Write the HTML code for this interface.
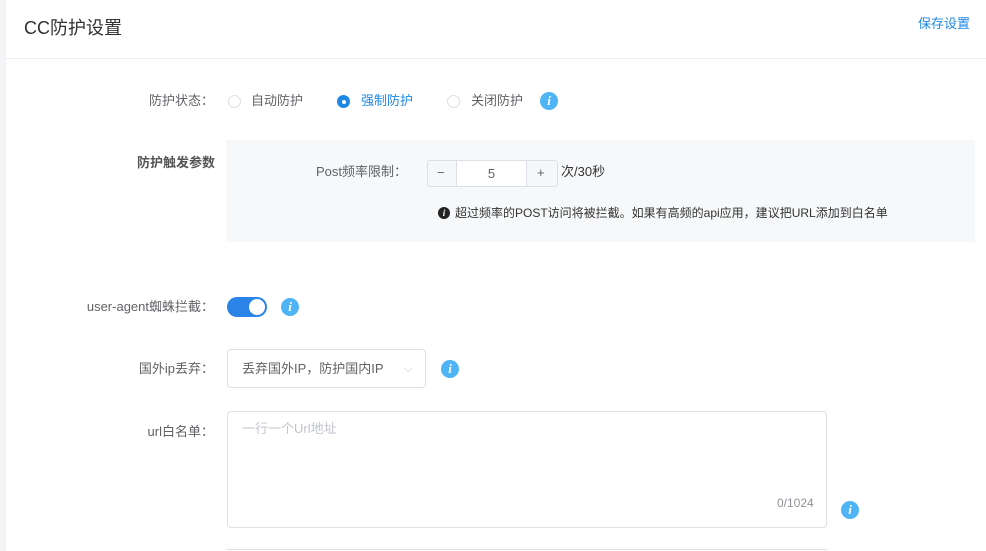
<!DOCTYPE html>
<html><head><meta charset="utf-8"><style>
*{box-sizing:border-box;margin:0;padding:0}
body{width:986px;height:551px;overflow:hidden;background:#fff;font-family:"Liberation Sans","Noto Sans CJK SC",sans-serif;color:#606266;font-size:13px;position:relative}
.abs{position:absolute}
.strip{left:0;top:0;width:6px;height:551px;background:#f3f4f6}
.lbl{position:absolute;text-align:right;width:208px;left:0;line-height:16px}
.info{position:absolute;width:18px;height:18px;border-radius:50%;background:#4fb4f6;color:#fff;font:italic bold 13px/18px "Liberation Serif",serif;text-align:center}
.radio{position:absolute;width:13px;height:13px;border-radius:50%;border:1px solid #dcdfe6;background:#fff}
.txt{position:absolute;line-height:16px;white-space:nowrap}
</style></head><body>
<div class="abs strip"></div>
<div class="txt" style="left:24px;top:17px;font-size:18px;line-height:22px;color:#303133">CC防护设置</div>
<div class="txt" style="left:918px;top:16px;color:#1e88e5">保存设置</div>
<div class="abs" style="left:6px;top:58px;width:980px;height:1px;background:#ebeef5"></div>

<div class="lbl" style="top:93px;width:214px">防护状态：</div>
<div class="radio" style="left:228px;top:95px"></div>
<div class="txt" style="left:251px;top:93px">自动防护</div>
<div class="radio" style="left:337px;top:95px;background:#1e88e5;border-color:#1e88e5"><div style="position:absolute;left:3.5px;top:3.5px;width:4px;height:4px;border-radius:50%;background:#fff"></div></div>
<div class="txt" style="left:361px;top:93px;color:#1e88e5">强制防护</div>
<div class="radio" style="left:447px;top:95px"></div>
<div class="txt" style="left:471px;top:93px">关闭防护</div>
<div class="info" style="left:540px;top:92px">i</div>

<div class="abs" style="left:226px;top:140px;width:749px;height:102px;background:#f7f8fa"></div>
<div class="lbl" style="top:155px;font-weight:bold;color:#555;width:215px">防护触发参数</div>
<div class="txt" style="left:316px;top:164px">Post频率限制：</div>
<div class="abs" style="left:427px;top:160px;width:131px;height:27px;border:1px solid #dcdfe6;border-radius:3px;background:#f5f7fa"></div>
<div class="abs" style="left:456px;top:161px;width:71px;height:25px;background:#fff;border-left:1px solid #dcdfe6;border-right:1px solid #dcdfe6;text-align:center;line-height:25px;color:#606266">5</div>
<div class="txt" style="left:437px;top:165px">−</div>
<div class="txt" style="left:537px;top:165px">+</div>
<div class="txt" style="left:561px;top:164px;color:#333">次/30秒</div>
<div class="abs" style="left:438px;top:207px;width:12px;height:12px;border-radius:50%;background:#222;color:#fff;font:italic bold 9px/12px 'Liberation Serif',serif;text-align:center">i</div>
<div class="txt" style="left:455px;top:205px;font-size:12px;color:#333">超过频率的POST访问将被拦截。如果有高频的api应用，建议把URL添加到白名单</div>

<div class="lbl" style="top:299px;width:214px">user-agent蜘蛛拦截：</div>
<div class="abs" style="left:227px;top:297px;width:40px;height:20px;border-radius:10px;background:#2a84e8"><div style="position:absolute;right:2px;top:2px;width:16px;height:16px;border-radius:50%;background:#fff"></div></div>
<div class="info" style="left:281px;top:298px">i</div>

<div class="lbl" style="top:361px;width:214px">国外ip丢弃：</div>
<div class="abs" style="left:227px;top:349px;width:199px;height:39px;border:1px solid #dcdfe6;border-radius:4px"></div>
<div class="txt" style="left:242px;top:361px">丢弃国外IP，防护国内IP</div>
<div class="txt" style="left:404px;top:361px;color:#c0c4cc;font-size:11px">⌵</div>
<div class="info" style="left:441px;top:360px">i</div>

<div class="lbl" style="top:424px;width:214px">url白名单：</div>
<div class="abs" style="left:227px;top:411px;width:600px;height:117px;border:1px solid #dcdfe6;border-radius:4px"></div>
<div class="txt" style="left:242px;top:421px;color:#c0c4cc">一行一个Url地址</div>
<div class="txt" style="left:777px;top:495px;font-size:12px;color:#909399">0/1024</div>
<div class="info" style="left:841px;top:501px">i</div>
<div class="abs" style="left:227px;top:549px;width:600px;height:2px;border-top:1px solid #dcdfe6"></div>
</body></html>
